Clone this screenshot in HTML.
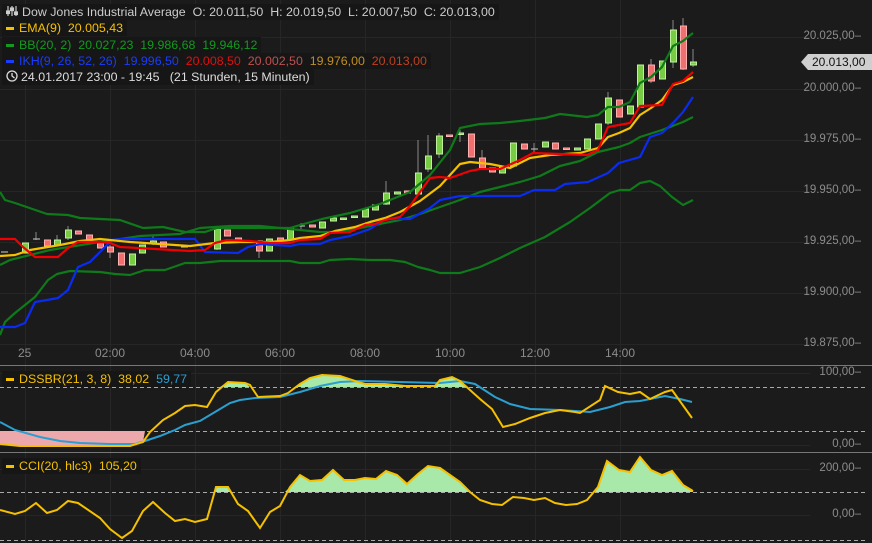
<!DOCTYPE html>
<html><head><meta charset="utf-8"><style>
html,body{margin:0;padding:0;background:#1b1b1b;}
body{width:872px;height:543px;overflow:hidden;position:relative;font-family:"Liberation Sans",sans-serif;}
.lg{position:absolute;left:2px;font-size:12.4px;line-height:16px;height:16px;background:#161616;padding:0 4px 0 4px;white-space:nowrap;}
.ax{position:absolute;right:11px;font-size:11.5px;color:#8c8c8c;}
.tx{position:absolute;font-size:12px;color:#8c8c8c;top:346px;}
</style></head><body>
<svg width="872" height="543" style="position:absolute;left:0;top:0">
<g stroke="#262626" stroke-width="1">
<line x1="0" y1="37.5" x2="810" y2="37.5"/><line x1="0" y1="89.5" x2="810" y2="89.5"/><line x1="0" y1="140.5" x2="810" y2="140.5"/><line x1="0" y1="191.5" x2="810" y2="191.5"/><line x1="0" y1="242.5" x2="810" y2="242.5"/><line x1="0" y1="293.5" x2="810" y2="293.5"/><line x1="0" y1="344.5" x2="810" y2="344.5"/>
<line x1="25.5" y1="0" x2="25.5" y2="543"/><line x1="110.5" y1="0" x2="110.5" y2="543"/><line x1="195.5" y1="0" x2="195.5" y2="543"/><line x1="280.5" y1="0" x2="280.5" y2="543"/><line x1="365.5" y1="0" x2="365.5" y2="543"/><line x1="450.5" y1="0" x2="450.5" y2="543"/><line x1="535.5" y1="0" x2="535.5" y2="543"/><line x1="620.5" y1="0" x2="620.5" y2="543"/>
<line x1="0" y1="373.5" x2="810" y2="373.5"/><line x1="0" y1="445.5" x2="810" y2="445.5"/><line x1="0" y1="469.5" x2="810" y2="469.5"/><line x1="0" y1="515.5" x2="810" y2="515.5"/>
</g>
<line x1="0" y1="365.5" x2="872" y2="365.5" stroke="#777"/>
<line x1="0" y1="452.5" x2="872" y2="452.5" stroke="#777"/>
<g stroke="#aaa" stroke-dasharray="4,3" stroke-width="1">
<line x1="0" y1="387.5" x2="865" y2="387.5"/><line x1="0" y1="431.5" x2="865" y2="431.5"/>
<line x1="0" y1="492.5" x2="865" y2="492.5"/><line x1="0" y1="540.5" x2="865" y2="540.5"/>
</g>
<g stroke="#888" stroke-width="1">
<line x1="36" y1="232" x2="36" y2="240"/><line x1="386" y1="181" x2="386" y2="205"/><line x1="418" y1="140" x2="418" y2="195"/><line x1="428" y1="135" x2="428" y2="172"/><line x1="439" y1="133" x2="439" y2="158"/><line x1="460" y1="130" x2="460" y2="142"/><line x1="482" y1="150" x2="482" y2="170"/><line x1="534" y1="143" x2="534" y2="152"/><line x1="608" y1="92" x2="608" y2="125"/><line x1="651" y1="59" x2="651" y2="83"/><line x1="673" y1="20" x2="673" y2="68"/><line x1="683" y1="18" x2="683" y2="70"/><line x1="693" y1="49" x2="693" y2="67"/><line x1="259" y1="240" x2="259" y2="258"/><line x1="110" y1="245" x2="110" y2="258"/><line x1="57" y1="235" x2="57" y2="246"/><line x1="153" y1="235" x2="153" y2="245"/><line x1="68" y1="226" x2="68" y2="240"/><line x1="217" y1="226" x2="217" y2="250"/><line x1="301" y1="223" x2="301" y2="230"/>
</g>
<g stroke-width="1">
<g fill="#77cc44" stroke="#bff0a0">
<rect x="22.5" y="243" width="6" height="10"/><rect x="54.5" y="240" width="6" height="5"/><rect x="65.5" y="230" width="6" height="8"/><rect x="129.5" y="254" width="6" height="11"/><rect x="139.5" y="245" width="6" height="8"/><rect x="150.5" y="241" width="6" height="2"/><rect x="214.5" y="229" width="6" height="20"/><rect x="266.5" y="239" width="6" height="12"/><rect x="287.5" y="228" width="6" height="12"/><rect x="319.5" y="222" width="6" height="6"/><rect x="330.5" y="218" width="6" height="3"/><rect x="340.5" y="218" width="6" height="1.5"/><rect x="351.5" y="216" width="6" height="1.5"/><rect x="362.5" y="209" width="6" height="8"/><rect x="372.5" y="205" width="6" height="5"/><rect x="383.5" y="193" width="6" height="11"/><rect x="394.5" y="192" width="6" height="2"/><rect x="415.5" y="173" width="6" height="21"/><rect x="425.5" y="156" width="6" height="13"/><rect x="436.5" y="136" width="6" height="18"/><rect x="457.5" y="133" width="6" height="1.5"/><rect x="499.5" y="167" width="6" height="6"/><rect x="510.5" y="143" width="6" height="23"/><rect x="542.5" y="142" width="6" height="5"/><rect x="574.5" y="148" width="6" height="2"/><rect x="584.5" y="139" width="6" height="10"/><rect x="595.5" y="124" width="6" height="15"/><rect x="605.5" y="98" width="6" height="25"/><rect x="627.5" y="106" width="6" height="8"/><rect x="637.5" y="65" width="6" height="42"/><rect x="659.5" y="61" width="6" height="18"/><rect x="670.5" y="30" width="6" height="32"/><rect x="690.5" y="62" width="6" height="3"/>
</g>
<g fill="#f07070" stroke="#ffb0b0">
<rect x="44.5" y="240" width="6" height="6"/><rect x="75.5" y="231" width="6" height="3"/><rect x="86.5" y="235" width="6" height="6"/><rect x="97.5" y="242" width="6" height="6"/><rect x="107.5" y="247" width="6" height="5"/><rect x="118.5" y="253" width="6" height="12"/><rect x="160.5" y="242" width="6" height="5"/><rect x="224.5" y="230" width="6" height="6"/><rect x="235.5" y="238" width="6" height="3"/><rect x="256.5" y="241" width="6" height="10"/><rect x="277.5" y="238" width="6" height="3"/><rect x="309.5" y="225" width="6" height="2"/><rect x="404.5" y="191" width="6" height="2"/><rect x="446.5" y="135" width="6" height="1.5"/><rect x="468.5" y="134" width="6" height="23"/><rect x="479.5" y="158" width="6" height="10"/><rect x="489.5" y="168" width="6" height="4"/><rect x="521.5" y="144" width="6" height="5"/><rect x="552.5" y="143" width="6" height="6"/><rect x="563.5" y="148" width="6" height="1.5"/><rect x="616.5" y="100" width="6" height="17"/><rect x="648.5" y="65" width="6" height="16"/><rect x="680.5" y="26" width="6" height="43"/>
</g>
<g stroke="#ccc"><line x1="1" y1="252" x2="8" y2="252"/><line x1="33" y1="239" x2="40" y2="239"/><line x1="181" y1="247" x2="188" y2="247"/><line x1="245" y1="241" x2="252" y2="241"/><line x1="298" y1="226" x2="305" y2="226"/><line x1="531" y1="149" x2="538" y2="149"/></g>
</g>
<g fill="none" stroke-width="2.2" stroke-linejoin="round">
<polyline stroke="#0e7a1a" points="0,192 5,200 15,203 47,214 68,215 80,218 120,220 143,228 163,227 185,232 205,232 217,228 260,228 290,228 300,225 322,219 350,213 380,204 410,192 430,175 450,150 460,128 480,124 500,123 520,121 545,118 560,114 587,117 598,115 608,107 619,107 630,102 640,83 651,77 662,67 673,46 683,41 693,33"/>
<polyline stroke="#0e7a1a" points="0,265 10,260 50,250 100,242 140,236 180,234 200,228 230,226 260,226 290,229 320,232 340,232 360,228 380,224 400,220 420,214 440,207 460,200 480,192 500,187 520,182 540,176 560,166 580,161 598,152 619,147 630,143 640,137 662,130 683,122 693,117"/>
<polyline stroke="#0e7a1a" points="0,335 5,322 15,313 35,297 48,280 57,274 70,271 100,272 115,274 130,275 145,270 165,270 185,263 200,263 220,261 290,261 300,263 320,263 330,260 350,259 370,260 390,260 405,262 418,267 430,270 440,273 460,273 480,267 500,258 520,248 545,237 570,222 590,208 610,193 620,190 630,190 640,183 650,181 660,186 672,197 683,205 693,200"/>
<polyline stroke="#0a2cf0" points="0,327 15,327 25,323 35,302 47,300 58,298 68,290 78,267 90,262 100,252 112,240 122,239 195,239 205,252 238,253 248,247 260,244 290,246 300,244 320,244 330,240 350,236 370,229 385,219 410,219 430,208 440,200 460,196 520,196 534,190 555,190 565,184 588,182 608,173 619,163 640,157 650,137 662,133 673,123 683,112 693,97"/>
<polyline stroke="#f5c000" points="0,256 15,255 30,250 60,245 80,241 100,239 110,240 130,242 190,246 215,243 240,242 270,242 290,240 300,238 320,236 335,231 355,227 370,222 385,218 400,212 420,201 440,186 460,164 470,162 490,164 510,168 530,158 550,155 580,153 598,148 608,137 619,133 630,128 640,115 651,108 662,100 673,85 683,82 693,77"/>
<polyline stroke="#f00000" points="0,239 15,239 23,247 35,257 58,257 68,248 78,242 100,242 110,243 120,247 190,251 205,250 215,243 227,240 250,241 270,243 290,243 300,240 320,239 330,233 350,232 365,225 375,224 385,220 400,217 410,206 430,178 440,177 450,178 470,171 480,169 500,169 520,160 533,153 587,155 598,150 608,127 619,125 630,123 640,106 662,105 673,84 683,81 693,72"/>
</g>
<polygon fill="#eda8ac" points="0,431 145,431 143,442 130,446 20,446 0,444"/>
<path fill="#a8e8a8" d="M220,387 L228,382 L245,383 L250,387Z M296,387 L300,384 L310,378 L322,375 L340,376 L355,381 L365,384 L385,384 L405,386 L435,386 L440,380 L452,377 L460,381 L466,387Z"/>
<polyline fill="none" stroke="#2a9fd0" stroke-width="2" points="0,422 15,430 40,437 60,441 80,443 110,444 135,444 145,441 160,436 175,430 185,425 200,421 215,412 230,403 240,400 255,398 280,397 300,392 320,386 340,382 360,381 400,382 440,383 460,381 475,384 495,397 510,404 530,409 560,410 590,412 610,407 625,402 640,401 665,396 680,399 692,402"/>
<polyline fill="none" stroke="#f5c000" stroke-width="2" points="0,444 20,446 130,446 143,442 150,432 163,420 175,413 185,406 195,405 207,407 216,392 228,382 245,383 250,385 258,397 280,396 288,393 300,384 310,378 322,375 340,376 355,381 365,384 385,384 405,386 435,386 440,380 452,377 460,381 480,399 492,409 503,427 515,424 530,418 545,413 560,410 575,412 580,413 600,400 605,386 618,392 630,394 640,392 650,399 665,392 672,390 692,418"/>
<path fill="#a8e8a8" d="M215,492 L216,487 L228,487 L230,492Z M285,492 L290,487 L300,475 L310,481 L322,480 L333,470 L344,480 L355,480 L365,478 L376,479 L386,471 L397,475 L407,484 L418,474 L428,466 L440,468 L460,482 L470,492Z M595,492 L598,487 L607,461 L619,470 L630,472 L640,457 L651,470 L662,475 L672,471 L683,485 L693,491 L693,492Z"/>
<polyline fill="none" stroke="#f5c000" stroke-width="2" points="0,510 15,514 25,511 36,503 47,513 57,510 68,501 78,503 100,518 110,529 122,538 132,531 143,511 153,502 165,513 175,521 185,519 195,522 207,519 216,487 228,487 238,504 248,511 260,528 270,512 280,506 290,487 300,475 310,481 322,480 333,470 344,480 355,480 365,478 376,479 386,471 397,475 407,484 418,474 428,466 440,468 460,482 470,492 480,500 492,504 502,505 513,497 524,498 534,500 545,498 555,503 566,505 577,504 587,500 598,487 607,461 619,470 630,472 640,457 651,470 662,475 672,471 683,485 693,491"/>
<polygon fill="#cfcfcf" points="801,62 808,54 872,54 872,70 808,70"/>
</svg>
<div style="position:absolute;left:812px;top:54px;font-size:12px;color:#111;line-height:16px">20.013,00</div>
<div class="ax" style="top:30px">20.025,00–</div>
<div class="ax" style="top:82px">20.000,00–</div>
<div class="ax" style="top:133px">19.975,00–</div>
<div class="ax" style="top:184px">19.950,00–</div>
<div class="ax" style="top:235px">19.925,00–</div>
<div class="ax" style="top:286px">19.900,00–</div>
<div class="ax" style="top:337px">19.875,00–</div>
<div class="ax" style="top:366px">100,00–</div>
<div class="ax" style="top:438px">0,00–</div>
<div class="ax" style="top:462px">200,00–</div>
<div class="ax" style="top:508px">0,00–</div>
<div class="tx" style="left:18px">25</div>
<div class="tx" style="left:95px">02:00</div>
<div class="tx" style="left:180px">04:00</div>
<div class="tx" style="left:265px">06:00</div>
<div class="tx" style="left:350px">08:00</div>
<div class="tx" style="left:435px">10:00</div>
<div class="tx" style="left:520px">12:00</div>
<div class="tx" style="left:605px">14:00</div>
<div class="lg" style="top:4px;color:#ccc"><svg width="12" height="12" style="vertical-align:-1px;margin-right:4px"><g stroke="#ccc" stroke-width="1.2" fill="none"><line x1="2" y1="1" x2="2" y2="11"/><line x1="6" y1="1" x2="6" y2="11"/><line x1="10" y1="1" x2="10" y2="11"/><rect x="0.5" y="6" width="3" height="2.5" fill="#ccc"/><rect x="4.5" y="3" width="3" height="2.5" fill="#ccc"/><rect x="8.5" y="7" width="3" height="2.5" fill="#ccc"/></g></svg>Dow Jones Industrial Average&nbsp; O: 20.011,50&nbsp; H: 20.019,50&nbsp; L: 20.007,50&nbsp; C: 20.013,00</div>
<div class="lg" style="top:20px;color:#f5c000"><span style="display:inline-block;width:8px;height:3px;background:#f5c000;vertical-align:middle;margin-right:5px"></span>EMA(9)&nbsp; 20.005,43</div>
<div class="lg" style="top:37px;color:#139a1e"><span style="display:inline-block;width:8px;height:3px;background:#139a1e;vertical-align:middle;margin-right:5px"></span>BB(20, 2)&nbsp; 20.027,23&nbsp; 19.986,68&nbsp; 19.946,12</div>
<div class="lg" style="top:53px;color:#1a3cff"><span style="display:inline-block;width:8px;height:3px;background:#1a3cff;vertical-align:middle;margin-right:5px"></span>IKH(9, 26, 52, 26)&nbsp; 19.996,50&nbsp; <span style="color:#e01010">20.008,50</span>&nbsp; <span style="color:#c05050">20.002,50</span>&nbsp; <span style="color:#c09020">19.976,00</span>&nbsp; <span style="color:#c04020">20.013,00</span></div>
<div class="lg" style="top:69px;color:#ddd"><svg width="12" height="12" style="vertical-align:-1px;margin-right:3px"><circle cx="6" cy="6" r="5" stroke="#ddd" stroke-width="1.3" fill="none"/><path d="M6 3 V6 L8.5 8" stroke="#ddd" stroke-width="1.3" fill="none"/></svg>24.01.2017 23:00 - 19:45&nbsp;&nbsp; (21 Stunden, 15 Minuten)</div>
<div class="lg" style="top:371px;color:#f5c000"><span style="display:inline-block;width:8px;height:3px;background:#f5c000;vertical-align:middle;margin-right:5px"></span>DSSBR(21, 3, 8)&nbsp; 38,02&nbsp; <span style="color:#2a9fd0">59,77</span></div>
<div class="lg" style="top:458px;color:#f5c000"><span style="display:inline-block;width:8px;height:3px;background:#f5c000;vertical-align:middle;margin-right:5px"></span>CCI(20, hlc3)&nbsp; 105,20</div>
</body></html>
